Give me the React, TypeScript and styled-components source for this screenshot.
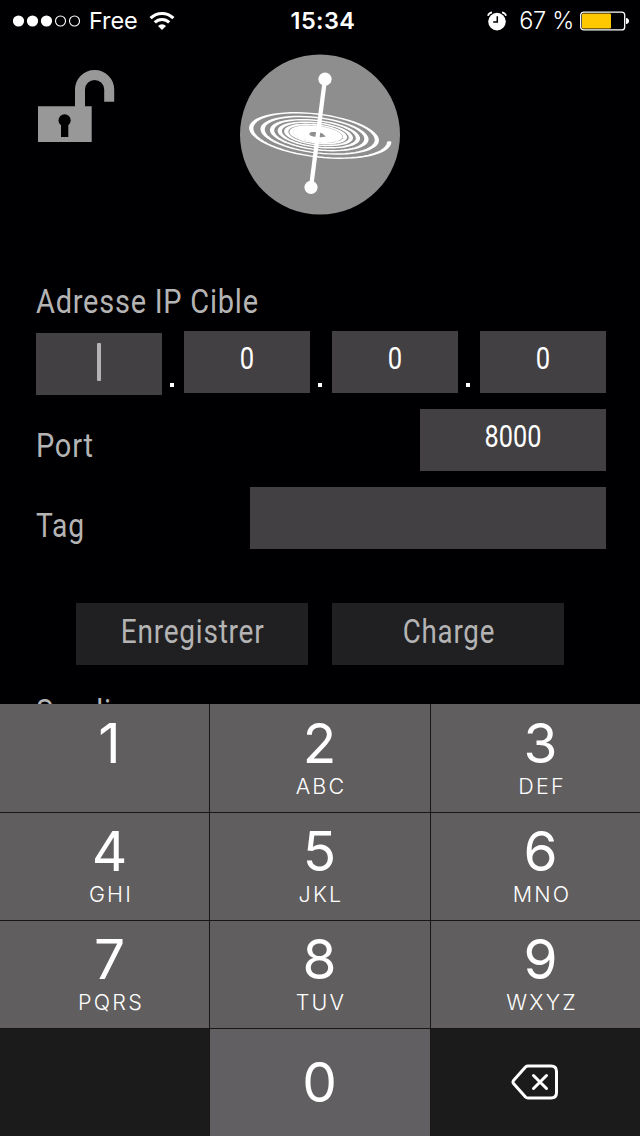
import React from "react";
import styled, { createGlobalStyle } from "styled-components";

const Global = createGlobalStyle`
  * { box-sizing: border-box; }
  html, body { margin: 0; padding: 0; background: #000; }
  body { width: 640px; height: 1136px; overflow: hidden; }
`;

const Screen = styled.main`
  width: 640px;
  height: 1136px;
  display: flex;
  flex-direction: column;
  background: #000002;
  color: #fff;
  font-family: Inter, "Liberation Sans", sans-serif;
  overflow: hidden;
`;

const StatusBar = styled.header`
  height: 40px;
  flex: none;
  display: grid;
  grid-template-columns: 1fr auto 1fr;
  align-items: center;
  padding: 1px 11px 0 13px;
  font-size: 23.5px;
  line-height: 40px;
`;

const StatusSide = styled.div<{ $end?: boolean }>`
  display: flex;
  align-items: center;
  justify-content: ${(p) => (p.$end ? "flex-end" : "flex-start")};
  height: 40px;
`;

const Carrier = styled.span`
  margin: 0 11px 0 9px;
  letter-spacing: -0.1px;
  font-weight: 380;
`;

const Clock = styled.time`
  font-weight: 600;
  font-size: 23.5px;
  letter-spacing: 0.4px;
  padding-left: 4px;
`;

const Percent = styled.span`
  margin: 0 6px 0 12px;
  letter-spacing: -0.3px;
  font-weight: 350;
`;

const Content = styled.section`
  height: 664px;
  flex: none;
  display: flex;
  flex-direction: column;
  padding: 0 34px 0 36px;
  overflow: hidden;
  font-family: Roboto, "Liberation Sans", sans-serif;
`;

const Brand = styled.div`
  height: 234px;
  flex: none;
  display: flex;
  align-items: flex-start;
  padding: 14px 0 0 1px;
`;

const LockIcon = styled.svg`
  display: block;
  margin: 14px 125px 0 0;
`;

const Logo = styled.svg`
  display: block;
`;

const Narrow = styled.span<{ $origin?: string; $space?: number; $scale?: number }>`
  display: inline-block;
  white-space: nowrap;
  letter-spacing: ${(p) => p.$space ?? 0.9}px;
  transform: scaleX(${(p) => p.$scale ?? 0.852});
  transform-origin: ${(p) => p.$origin ?? "left"} center;
`;

const Label = styled.label`
  font-size: 34px;
  line-height: 40px;
  color: #b5b4b5;
`;

const AddressLabel = styled(Label)`
  height: 57px;
  padding-top: 7px;
  flex: none;
`;

const AddressRow = styled.div`
  display: flex;
  height: 78px;
  flex: none;
`;

const Field = styled.div<{ $width: number; $focused?: boolean }>`
  width: ${(p) => p.$width}px;
  height: 62px;
  flex: none;
  margin-top: ${(p) => (p.$focused ? 2 : 0)}px;
  padding-top: ${(p) => (p.$focused ? 10 : 7)}px;
  background: #424042;
  color: #fff;
  font-size: 32px;
  line-height: 40px;
  display: flex;
  justify-content: center;
  align-items: flex-start;
`;

const Caret = styled.span`
  width: 4px;
  height: 38px;
  border-radius: 1px;
  background: #b5b3b5;
`;

const Dot = styled.span`
  width: 22px;
  height: 56px;
  display: flex;
  align-items: flex-end;
  justify-content: center;
  padding-right: 2px;
  &::after {
    content: "";
    width: 4px;
    height: 4px;
    background: #fff;
  }
`;

const FormRow = styled.div<{ $labelTop: number }>`
  height: 78px;
  flex: none;
  display: flex;
  justify-content: space-between;
  align-items: flex-start;
  ${Label} { padding-top: ${(p) => p.$labelTop}px; }
`;

const Actions = styled.div`
  display: flex;
  padding-left: 40px;
  gap: 24px;
  margin-top: 38px;
  flex: none;
`;

const ActionButton = styled.button`
  width: 232px;
  height: 62px;
  border: 0;
  padding: 0 0 5px 1px;
  background: #202022;
  color: #b5b4b5;
  font: 33px/40px Roboto, "Liberation Sans", sans-serif;
`;

const ClippedLabel = styled(Label)`
  margin-top: 26px;
  flex: none;
`;

const Keypad = styled.section`
  height: 432px;
  flex: none;
  display: grid;
  grid-template-columns: 209px 220px 209px;
  grid-template-rows: 108px 107px 107px 107px;
  gap: 1px;
  background: #171716;
`;

const Key = styled.button<{ $left?: number; $top?: number; $bare?: boolean; $dark?: boolean }>`
  border: 0;
  margin: 0;
  padding: ${(p) => p.$top ?? 21}px 0 0 ${(p) => p.$left ?? 0}px;
  display: flex;
  flex-direction: column;
  align-items: center;
  justify-content: flex-start;
  background: ${(p) => (p.$dark ? "#1b1b1c" : p.$bare ? "#625f62" : "#605e5e")};
  color: #fff;
  font-family: Inter, "Liberation Sans", sans-serif;
`;

const Digit = styled.span`
  font-size: 55px;
  line-height: 64px;
  font-weight: 390;
  margin-left: -1px;
`;

const Letters = styled.span`
  font-size: 21.5px;
  line-height: 22px;
  letter-spacing: 2.2px;
  padding-left: 2px;
  font-weight: 350;
`;

const DeleteIcon = styled.svg`
  display: block;
  margin: 14px 2px 0 0;
`;

function spiralPath() {
  const points: string[] = [];
  let radius = 72.3;
  for (let deg = 0; radius > 9; deg += 6) {
    radius = 72.3 * Math.pow(0.827, deg / 360);
    const t = (deg * Math.PI) / 180;
    points.push(`${(radius * Math.cos(t)).toFixed(2)} ${(radius * Math.sin(t)).toFixed(2)}`);
  }
  return "M" + points.join("L");
}

const keys = [
  ["1", ""], ["2", "ABC"], ["3", "DEF"],
  ["4", "GHI"], ["5", "JKL"], ["6", "MNO"],
  ["7", "PQRS"], ["8", "TUV"], ["9", "WXYZ"],
];
const shifts = [11, 0, 11];

export default function App() {
  return (
    <Screen>
      <Global />
      <StatusBar>
        <StatusSide>
          <svg width="67" height="14" viewBox="0 0 67 14">
            {[0, 1, 2, 3, 4].map((i) => (
              <circle key={i} cx={5.5 + i * 14} cy="7" r={i < 3 ? 5.6 : 5}
                fill={i < 3 ? "#fff" : "none"} stroke={i < 3 ? "none" : "#fff"} strokeWidth="1.1" />
            ))}
          </svg>
          <Carrier>Free</Carrier>
          <svg width="26" height="20" viewBox="0 0 26 20" fill="none" stroke="#fff">
            <path d="M1.600 7.200a16.100 16.100 0 0 1 22.800 0" strokeWidth="3.1" />
            <path d="M5.800 11.400a10.200 10.200 0 0 1 14.400 0" strokeWidth="3" />
            <path d="M13 19l-4-4.100a5.700 5.700 0 0 1 8 0z" fill="#fff" stroke="none" />
          </svg>
        </StatusSide>
        <Clock>15:34</Clock>
        <StatusSide $end>
          <svg width="20" height="20" viewBox="0 0 20 20" fill="none">
            <circle cx="10" cy="10.6" r="8.8" fill="#fff" />
            <path d="M.9 4.800Q1.600 2 5 1.300M19.100 4.800Q18.400 2 15 1.300" stroke="#fff" strokeWidth="1.7" />
            <path d="M10.300 5.200V11H6.200" stroke="#000" strokeWidth="1.5" />
          </svg>
          <Percent>67 %</Percent>
          <svg width="49" height="20" viewBox="0 0 49 20">
            <rect x=".7" y="1.1" width="44" height="17.8" rx="3" fill="none" stroke="#fff" strokeWidth="1.3" />
            <rect x="2" y="2.6" width="29" height="14.8" rx="1.2" fill="#ffc800" />
            <path d="M46 7q3 .4 3 3t-3 3z" fill="#fff" />
          </svg>
        </StatusSide>
      </StatusBar>

      <Content>
        <Brand>
          <LockIcon width="78" height="76" viewBox="37 68 78 76">
            <path d="M80 107V89.500a14.600 14.600 0 0 1 29.200 0V101.700" fill="none" stroke="#989898" strokeWidth="10" />
            <path d="M38 106.300H91.700V142H38z" fill="#989898" />
            <circle cx="64.6" cy="120.3" r="6.1" fill="#000" />
            <path d="M61 122h7.300v15H61z" fill="#000" />
          </LockIcon>
          <Logo width="160" height="161" viewBox="240 54 160 161">
            <circle cx="320" cy="134.5" r="80" fill="#8e8e8e" />
            <path d={spiralPath()} transform="matrix(1 .105 0 .325 317 134.4)" fill="none" stroke="#fff" strokeWidth="4.3" strokeLinecap="round" />
            <path d="M325 79L311 187.500" stroke="#fff" strokeWidth="4.3" />
            <circle cx="325" cy="79.2" r="6.6" fill="#fff" />
            <circle cx="311" cy="187.3" r="6.6" fill="#fff" />
          </Logo>
        </Brand>

        <AddressLabel><Narrow>Adresse IP Cible</Narrow></AddressLabel>
        <AddressRow>
          <Field $width={126} $focused><Caret /></Field>
          <Dot />
          <Field $width={126}><Narrow $origin="center" $space={0} $scale={0.8}>0</Narrow></Field>
          <Dot />
          <Field $width={126}><Narrow $origin="center" $space={0} $scale={0.8}>0</Narrow></Field>
          <Dot />
          <Field $width={126}><Narrow $origin="center" $space={0} $scale={0.8}>0</Narrow></Field>
        </AddressRow>
        <FormRow $labelTop={16}>
          <Label><Narrow>Port</Narrow></Label>
          <Field $width={186}><Narrow $origin="center" $space={0} $scale={0.79}>8000</Narrow></Field>
        </FormRow>
        <FormRow $labelTop={18}>
          <Label><Narrow $scale={0.83}>Tag</Narrow></Label>
          <Field $width={356} />
        </FormRow>
        <Actions>
          <ActionButton><Narrow $origin="center" $scale={0.85}>Enregistrer</Narrow></ActionButton>
          <ActionButton><Narrow $origin="center" $scale={0.84}>Charge</Narrow></ActionButton>
        </Actions>
        <ClippedLabel><Narrow>Sending</Narrow></ClippedLabel>
      </Content>

      <Keypad>
        {keys.map(([digit, letters], i) => (
          <Key key={digit} $left={shifts[i % 3]} $top={i < 3 ? 7 : 6}>
            <Digit>{digit}</Digit>
            {letters && <Letters>{letters}</Letters>}
          </Key>
        ))}
        <Key $dark aria-hidden />
        <Key $bare><Digit>0</Digit></Key>
        <Key $bare $dark aria-label="Supprimer">
          <DeleteIcon width="48" height="36" viewBox="0 0 48 36" fill="none" stroke="#fff" strokeWidth="3" strokeLinejoin="round" strokeLinecap="round">
            <path d="M17 2H40Q45.500 2 45.500 7.500V28.500Q45.500 34 40 34H17Q15.500 34 14.500 33L2.500 19.500Q1.500 18 2.500 16.500L14.500 3Q15.500 2 17 2Z" />
            <path d="M22.500 11.500L35.500 24.500M35.500 11.500L22.500 24.500" />
          </DeleteIcon>
        </Key>
      </Keypad>
    </Screen>
  );
}
